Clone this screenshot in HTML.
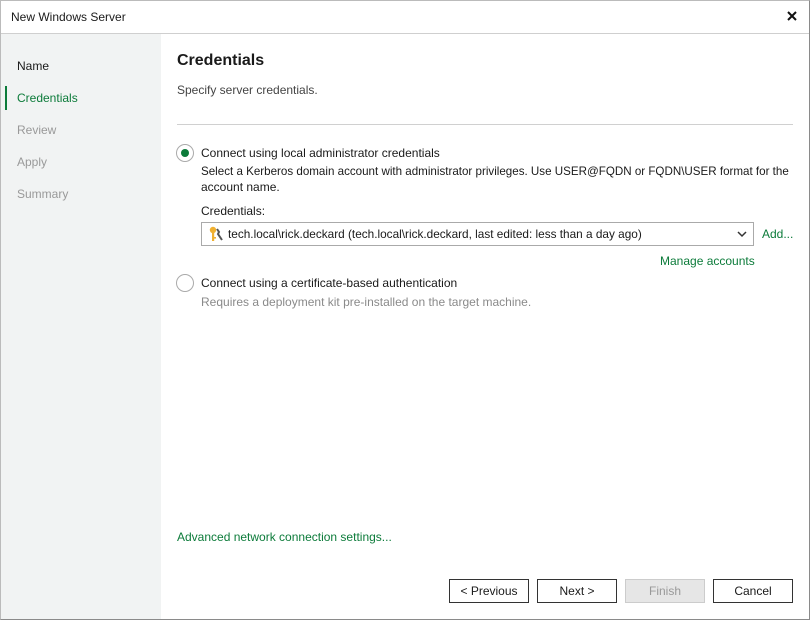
<!DOCTYPE html>
<html><head><meta charset="utf-8"><style>
*{margin:0;padding:0;box-sizing:border-box}
body{width:810px;height:620px;overflow:hidden;background:#fff;font-family:"Liberation Sans",sans-serif;font-size:12px;color:#1a1a1a;position:relative}
.a{position:absolute;white-space:nowrap;line-height:14px}
.win{position:absolute;left:0;top:0;width:810px;height:620px;border:1px solid #8a8a8a;border-top-color:#bbb;border-left-color:#bbb}
.g{color:#0c7b3a}
.btn{position:absolute;top:579px;width:80px;height:24px;border:1px solid #333;background:#fff;text-align:center;line-height:22px;font-size:12px}
</style></head><body>
<div class="win"></div>
<div class="a" style="left:11px;top:10px">New Windows Server</div>
<svg style="position:absolute;left:787px;top:11px" width="10" height="10"><path d="M1 1 L9 9 M9 1 L1 9" stroke="#111" stroke-width="2"/></svg>
<div style="position:absolute;left:1px;top:33px;width:808px;height:1px;background:#cfcfcf"></div>
<div style="position:absolute;left:1px;top:34px;width:160px;height:585px;background:#f1f3f3"></div>
<div class="a" style="left:17px;top:59px">Name</div>
<div style="position:absolute;left:5px;top:86px;width:2px;height:24px;background:#0c7b3a"></div>
<div class="a g" style="left:17px;top:91px">Credentials</div>
<div class="a" style="left:17px;top:123px;color:#999">Review</div>
<div class="a" style="left:17px;top:155px;color:#999">Apply</div>
<div class="a" style="left:17px;top:187px;color:#999">Summary</div>
<div class="a" style="left:177px;top:52px;font-size:16px;font-weight:bold;line-height:18px">Credentials</div>
<div class="a" style="left:177px;top:83px;color:#444">Specify server credentials.</div>
<div style="position:absolute;left:177px;top:124px;width:616px;height:1px;background:#d0d0d0"></div>
<div style="position:absolute;left:176px;top:144px;width:18px;height:18px;border:1px solid #aaa;border-radius:50%;background:#fff"></div>
<div style="position:absolute;left:181px;top:149px;width:8px;height:8px;border-radius:50%;background:#0c7b3a"></div>
<div class="a" style="left:201px;top:146px">Connect using local administrator credentials</div>
<div class="a" style="left:201px;top:165px;font-size:11.6px">Select a Kerberos domain account with administrator privileges. Use USER@FQDN or FQDN\USER format for the</div>
<div class="a" style="left:201px;top:180px">account name.</div>
<div class="a" style="left:201px;top:204px">Credentials:</div>
<div style="position:absolute;left:201px;top:222px;width:553px;height:24px;border:1px solid #aaa"></div>
<svg style="position:absolute;left:208px;top:226px" width="16" height="16" viewBox="0 0 16 16"><circle cx="5" cy="4" r="3.2" fill="#f0b030"/><rect x="4" y="6" width="2.2" height="9" fill="#f0b030"/><rect x="6" y="11" width="2" height="1.6" fill="#f0b030"/><path d="M9 3 L11 6 L10 8 L14 14" stroke="#555" stroke-width="2" fill="none"/></svg>
<div class="a" style="left:228px;top:227px;font-size:11.8px">tech.local\rick.deckard (tech.local\rick.deckard, last edited: less than a day ago)</div>
<svg style="position:absolute;left:737px;top:230px" width="10" height="8"><path d="M1 2 L5 6 L9 2" stroke="#333" stroke-width="1.5" fill="none"/></svg>
<div class="a g" style="left:762px;top:227px">Add...</div>
<div class="a g" style="left:660px;top:254px">Manage accounts</div>
<div style="position:absolute;left:176px;top:274px;width:18px;height:18px;border:1px solid #aaa;border-radius:50%;background:#fff"></div>
<div class="a" style="left:201px;top:276px">Connect using a certificate-based authentication</div>
<div class="a" style="left:201px;top:295px;color:#8a8a8a">Requires a deployment kit pre-installed on the target machine.</div>
<div class="a g" style="left:177px;top:530px">Advanced network connection settings...</div>
<div class="btn" style="left:449px">&lt; Previous</div>
<div class="btn" style="left:537px">Next &gt;</div>
<div class="btn" style="left:625px;background:#e6e6e6;border-color:#ccc;color:#999">Finish</div>
<div class="btn" style="left:713px">Cancel</div>
</body></html>
